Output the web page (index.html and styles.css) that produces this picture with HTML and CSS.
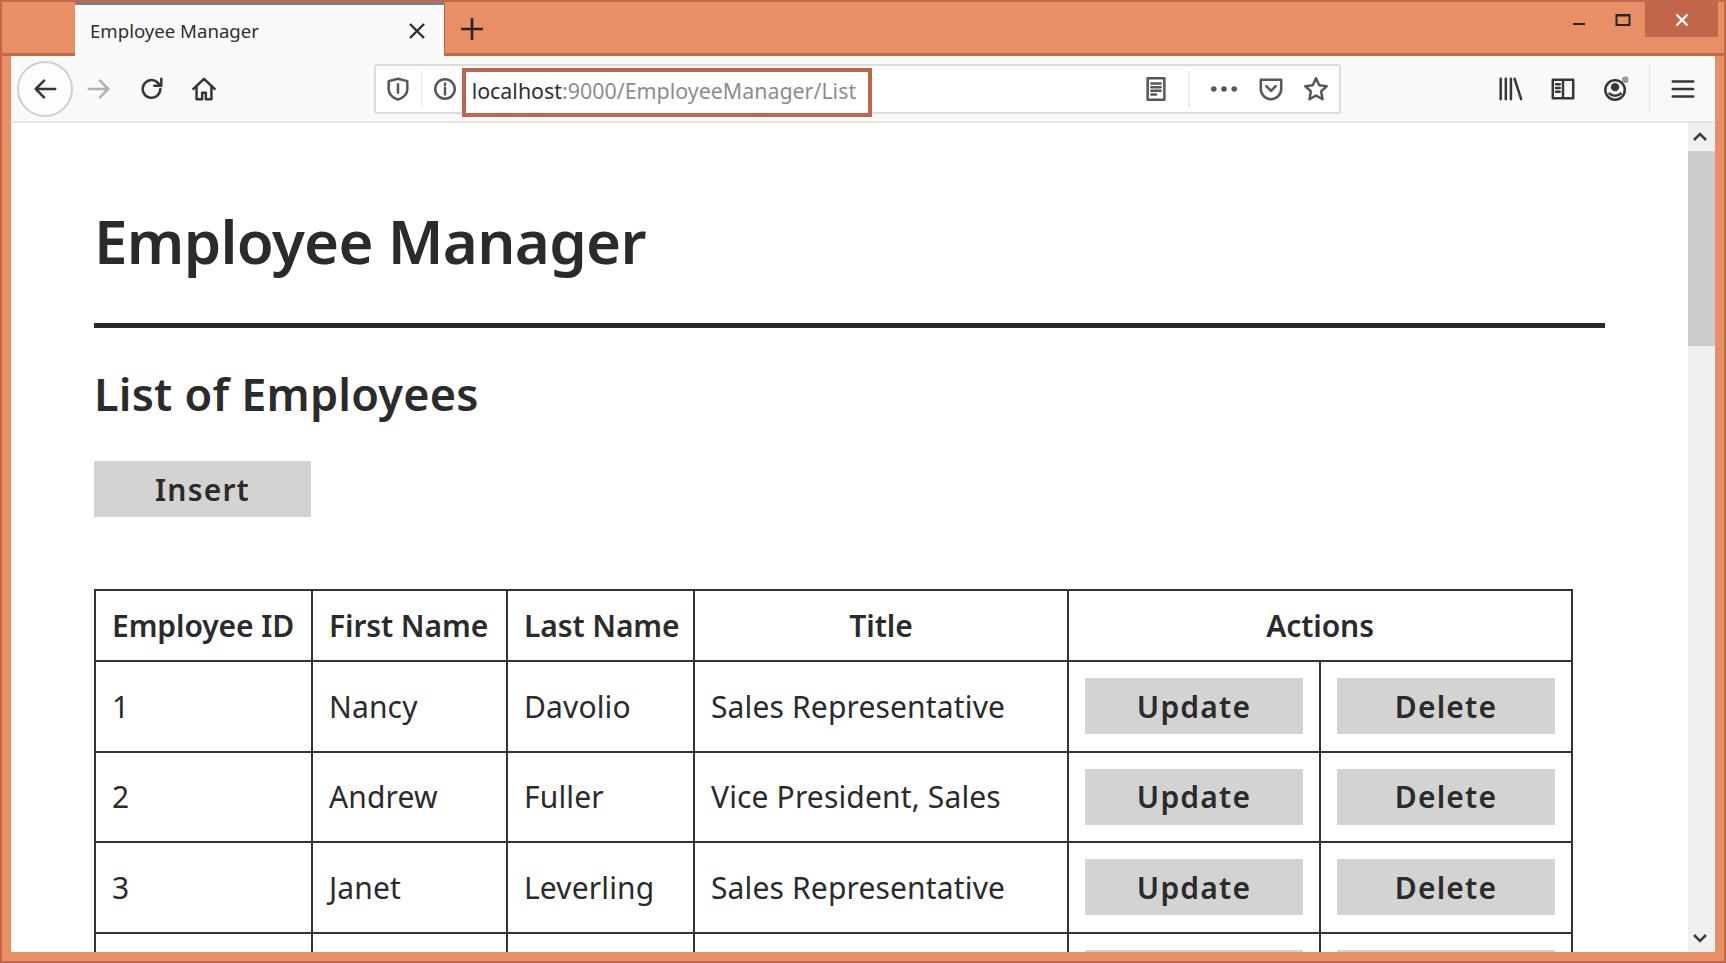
FILE: index.html
```html
<!DOCTYPE html>
<html lang="en">
<head>
<meta charset="utf-8">
<title>Employee Manager</title>
<link rel="stylesheet" href="styles.css">
</head>
<body>
<header class="titlebar">
  <div class="tab">
    <span class="tab-title">Employee Manager</span>
    <svg class="tab-close" viewBox="0 0 18 18"><path d="M2 2l14 14M16 2L2 16"/></svg>
  </div>
  <svg class="new-tab" viewBox="0 0 24 24"><path d="M12 1v22M1 12h22"/></svg>
  <div class="win-controls">
    <span class="win-btn"><svg class="win-icon" viewBox="0 0 16 16"><path d="M2 12h12"/></svg></span>
    <span class="win-btn"><svg class="win-icon" viewBox="0 0 16 16"><path d="M1.500 3h13v10h-13zM1.500 3.500h13" /></svg></span>
    <span class="win-btn win-close"><svg class="win-icon" viewBox="0 0 16 16"><path d="M2.500 2.500l11 11M13.500 2.500l-11 11"/></svg></span>
  </div>
</header>
<div class="window">
  <nav class="toolbar">
    <span class="back"><svg class="ico" viewBox="0 0 28 28"><path d="M25 14H4M13 5l-9 9 9 9"/></svg></span>
    <span class="nav-btn"><svg class="ico ico-off" viewBox="0 0 28 28"><path d="M3 14h21M15 5l9 9-9 9"/></svg></span>
    <span class="nav-btn"><svg class="ico" viewBox="0 0 28 28"><path d="M23 14a9.500 9.500 0 1 1-3-7l3 3M24 3v7.500h-7.500"/></svg></span>
    <span class="nav-btn"><svg class="ico" viewBox="0 0 28 28"><path d="M2.500 14L14 3l11.500 11M6 11.500V25h6v-7h4v7h6V11.500"/></svg></span>
    <div class="urlbar">
      <span class="url-shield"><svg class="ico ico-grey" viewBox="0 0 28 28"><path d="M14 3l10 2.500v9c0 5-5 9-10 11-5-2-10-6-10-11v-9zM14 9v9"/></svg></span>
      <span class="url-info"><svg class="ico ico-grey" viewBox="0 0 28 28"><circle cx="14" cy="14" r="10.500"/><path d="M14 13v7M14 8v2"/></svg></span>
      <span class="address"><span class="host">localhost</span>:9000/EmployeeManager/List</span>
      <span class="url-reader"><svg class="ico ico-grey" viewBox="0 0 28 28"><path d="M5 2.500h18v23H5zM9 8h10M9 12h10M9 16h10M9 20h5"/></svg></span>
      <span class="url-dots"><svg class="ico ico-grey" viewBox="0 0 28 28"><circle class="solid" cx="3" cy="14" r="3"/><circle class="solid" cx="14" cy="14" r="3"/><circle class="solid" cx="25" cy="14" r="3"/></svg></span>
      <span class="url-act"><svg class="ico ico-grey" viewBox="0 0 28 28"><path d="M3 4h22v10a11 11 0 0 1-22 0zM9 11l5 5 5-5"/></svg></span>
      <span class="url-act"><svg class="ico ico-grey" viewBox="0 0 28 28"><path d="M14 2.500l3.500 7.500 8 1-6 5.500 1.500 8.500-7-4-7 4 1.500-8.500-6-5.500 8-1z"/></svg></span>
    </div>
    <div class="tools">
      <span class="tool"><svg class="ico" viewBox="0 0 28 28"><path d="M4 3v22M9.500 3v22M15 3v22M19 3l7 22"/></svg></span>
      <span class="tool"><svg class="ico" viewBox="0 0 28 28"><path d="M3 4h22v20H3zM14 4v20M6.500 9h4M6.500 13h4M6.500 17h4"/></svg></span>
      <span class="tool tool-account"><svg class="ico" viewBox="0 0 28 28"><circle cx="13" cy="15" r="10.500"/><circle class="solid" cx="13" cy="12" r="4.500"/><path d="M7 19c3 3 9 3 12 0"/><circle class="dot" cx="24" cy="4" r="3.500"/></svg></span>
      <span class="tool tool-menu"><svg class="ico" viewBox="0 0 28 28"><path d="M3 6h22M3 14h22M3 22h22"/></svg></span>
    </div>
  </nav>
  <div class="viewport">
    <main class="page">
      <h1>Employee Manager</h1>
      <hr class="rule">
      <h2>List of Employees</h2>
      <button class="btn btn-insert">Insert</button>
      <table class="grid">
        <colgroup>
          <col class="c-id"><col class="c-first"><col class="c-last"><col class="c-title"><col class="c-act"><col class="c-act">
        </colgroup>
        <thead>
          <tr>
            <th>Employee ID</th><th>First Name</th><th>Last Name</th><th class="center">Title</th><th class="center" colspan="2">Actions</th>
          </tr>
        </thead>
        <tbody>
          <tr><td>1</td><td>Nancy</td><td>Davolio</td><td>Sales Representative</td><td><button class="btn">Update</button></td><td><button class="btn">Delete</button></td></tr>
          <tr><td>2</td><td>Andrew</td><td>Fuller</td><td>Vice President, Sales</td><td><button class="btn">Update</button></td><td><button class="btn">Delete</button></td></tr>
          <tr><td>3</td><td>Janet</td><td>Leverling</td><td>Sales Representative</td><td><button class="btn">Update</button></td><td><button class="btn">Delete</button></td></tr>
          <tr><td></td><td></td><td></td><td></td><td><button class="btn"></button></td><td><button class="btn"></button></td></tr>
        </tbody>
      </table>
    </main>
    <aside class="scrollbar">
      <svg class="arrow" viewBox="0 0 16 16"><path d="M2 11l6-6 6 6"/></svg>
      <div class="thumb"></div>
      <div class="track"></div>
      <svg class="arrow" viewBox="0 0 16 16"><path d="M2 5l6 6 6-6"/></svg>
    </aside>
  </div>
</div>
</body>
</html>
```

FILE: styles.css
```css
* { box-sizing: border-box; }
html, body { height: 100%; margin: 0; }
body {
  display: flex;
  flex-direction: column;
  height: 963px;
  overflow: hidden;
  background: #e98f66;
  border: 2px solid #c4684d;
  font-family: "Noto Sans", "Lato", sans-serif;
  color: #2b2a2c;
}

/* title bar */
.titlebar {
  display: flex;
  align-items: flex-start;
  height: 54px;
  flex: none;
  padding-left: 73px;
  border-bottom: 3px solid #c4684d;
}
.tab {
  display: flex;
  align-items: center;
  justify-content: space-between;
  width: 370px;
  height: 54px;
  padding: 0 18px 0 15px;
  background: #fafafa;
  border-top: 3px solid #7f8085;
  border-right: 1px solid #c4684d;
}
.tab-title { font: 18.600px "Noto Sans", sans-serif; color: #2f2f33; }
.tab-close { width: 18px; height: 18px; fill: none; stroke: #2d2d31; stroke-width: 2.4; }
.new-tab { width: 24px; height: 24px; margin: 15px 0 0 15px; fill: none; stroke: #26262a; stroke-width: 2.6; }
.win-controls { display: flex; margin-left: auto; margin-right: 6px; }
.win-btn { display: flex; align-items: center; justify-content: center; width: 44px; height: 35px; }
.win-close { width: 73px; margin-left: 0.500px; background: #c1664b; }
.win-icon { width: 16px; height: 16px; fill: none; stroke: #26262a; stroke-width: 2; }
.win-close .win-icon { stroke: #fff; stroke-width: 2.4; }

/* chrome */
.window {
  display: flex;
  flex-direction: column;
  flex: 1;
  min-height: 0;
  margin: 0 9px 9px 9px;
  background: #fff;
}
.toolbar {
  display: flex;
  align-items: center;
  flex: none;
  height: 67px;
  padding-left: 6px;
  background: #f9f9fa;
  border-bottom: 2px solid #e4e4e2;
}
.ico { width: 26px; height: 26px; overflow: visible; fill: none; stroke: #37373b; stroke-width: 2.7; stroke-linejoin: round; stroke-linecap: round; }
.ico-off { stroke: #b3b0ae; }
.ico-grey { stroke: #56565c; }
.solid { fill: #56565c; stroke: none; }
.tool-account .solid { fill: #37373b; }
.dot { fill: #9a9a9e; stroke: none; }
.back {
  display: flex;
  align-items: center;
  justify-content: center;
  flex: none;
  width: 56px;
  height: 56px;
  background: #fdfdfd;
  border: 2px solid #cfcfcd;
  border-radius: 50%;
}
.nav-btn { display: flex; align-items: center; justify-content: center; flex: none; width: 52.500px; }

.urlbar {
  display: flex;
  align-items: center;
  flex: none;
  width: 967px;
  height: 50px;
  margin-left: 143.500px;
  background: #fff;
  border: 2px solid #dcdcda;
  border-radius: 3px;
}
.url-shield { display: flex; justify-content: center; width: 47px; height: 36px; align-items: center; border-right: 1px solid #e6e6e6; }
.url-info { display: flex; justify-content: center; width: 41px; padding-left: 7px; }
.address {
  flex: none;
  align-self: flex-start;
  width: 410px;
  height: 49px;
  margin-top: 2px;
  padding-left: 6px;
  border: 4px solid #c0654b;
  font: 21.400px/38px "Noto Sans", sans-serif;
  color: #8d8d90;
  background: #fff;
  white-space: nowrap;
  overflow: hidden;
}
.host { color: #2f2f33; }
.url-reader { display: flex; justify-content: center; width: 68px; height: 36px; align-items: center; margin-left: 252px; border-right: 2px solid #ededec; }
.url-dots { display: flex; justify-content: center; width: 59.500px; padding-left: 10.500px; }
.url-act { display: flex; justify-content: center; width: 47px; }

.tools { display: flex; align-items: center; margin-left: 142px; }
.tool { display: flex; justify-content: center; width: 53px; }
.tool-menu { width: 67px; height: 50px; align-items: center; margin-left: 7px; border-left: 1px solid #e3e3e3; }

/* page */
.viewport { display: flex; flex: 1; min-height: 0; }
.page {
  flex: 1;
  min-width: 0;
  padding: 0 83px;
  overflow: hidden;
}
h1 {
  margin: 83px 0 0;
  font-size: 60px;
  line-height: 70px;
  font-weight: 600;
  letter-spacing: -0.700px;
}
.rule {
  height: 5px;
  margin: 47px 0 0;
  border: 0;
  background: #2b2a2c;
}
h2 {
  margin: 38px 0 0;
  font-size: 45px;
  line-height: 56px;
  font-weight: 600;
  letter-spacing: 0.200px;
}
.btn {
  display: block;
  width: 100%;
  height: 56px;
  border: 0;
  padding: 0;
  background: #d3d3d1;
  color: #2b2a2c;
  font: 600 30px "Noto Sans", "Lato", sans-serif;
  letter-spacing: 1.200px;
}
.btn-insert { width: 217px; margin-top: 39px; }

.grid {
  width: 1477px;
  margin-top: 72px;
  table-layout: fixed;
  border-collapse: collapse;
  font-size: 30px;
}
.c-id { width: 217px; }
.c-first { width: 195px; }
.c-last { width: 187px; }
.c-title { width: 374px; }
.c-act { width: 252px; }
.grid th, .grid td { border: 2px solid #333238; padding: 0 16px; text-align: left; white-space: nowrap; }
.grid th { height: 71px; font-weight: 600; letter-spacing: -0.100px; }
.grid td { height: 90.500px; font-weight: 400; letter-spacing: 0.150px; }
.grid td .btn { letter-spacing: 1.200px; }
.grid th.center { text-align: center; }

/* scrollbar */
.scrollbar {
  display: flex;
  flex-direction: column;
  align-items: center;
  flex: none;
  width: 27px;
  background: #f0f0ee;
}
.arrow { flex: none; width: 16px; height: 28px; margin-right: 4px; fill: none; stroke: #3f3f44; stroke-width: 2.6; }
.thumb { flex: none; width: 100%; height: 195px; background: #cdcdcd; }
.track { flex: 1; }
```
